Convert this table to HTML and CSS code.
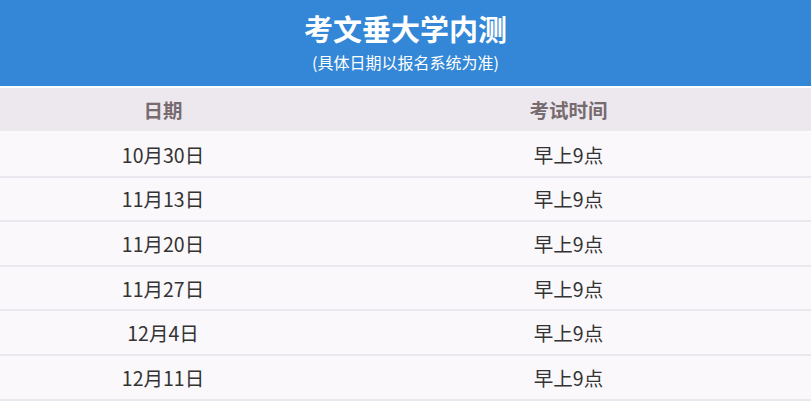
FILE: index.html
```html
<!DOCTYPE html>
<html lang="zh">
<head>
<meta charset="utf-8">
<title>考文垂大学内测</title>
<link rel="stylesheet" href="styles.css">
</head>
<body>
<div class="banner">
  <div class="title">考文垂大学内测</div>
  <div class="subtitle">(具体日期以报名系统为准)</div>
</div>
<div class="table">
  <div class="row head"><div class="c1">日期</div><div class="c2">考试时间</div></div>
  <div class="spacer"></div>
  <div class="row"><div class="c1">10月30日</div><div class="c2">早上9点</div></div>
  <div class="row"><div class="c1">11月13日</div><div class="c2">早上9点</div></div>
  <div class="row"><div class="c1">11月20日</div><div class="c2">早上9点</div></div>
  <div class="row"><div class="c1">11月27日</div><div class="c2">早上9点</div></div>
  <div class="row"><div class="c1">12月4日</div><div class="c2">早上9点</div></div>
  <div class="row"><div class="c1">12月11日</div><div class="c2">早上9点</div></div>
</div>
</body>
</html>
```
FILE: styles.css
```css
html, body {
  margin: 0;
  padding: 0;
  background: #ffffff;
  font-family: "Noto Sans CJK SC", "Noto Sans", sans-serif;
}
.banner {
  height: 86px;
  background: #3487d6;
  color: #ffffff;
  display: flex;
  flex-direction: column;
  align-items: center;
}
.title {
  margin-top: 9px;
  font-size: 29px;
  font-weight: 700;
  line-height: 38px;
}
.subtitle {
  margin-top: 5px;
  font-size: 16px;
  line-height: 20px;
}
.table {
  margin-top: 2px;
}
.row {
  display: grid;
  grid-template-columns: 326px 1fr;
  height: 44.6px;
  box-sizing: border-box;
  border-bottom: 2px solid #ebe7ef;
  background: #faf8fb;
  color: #333333;
  font-size: 19.5px;
  align-items: center;
  text-align: center;
}
.row.head {
  height: 43px;
  border-bottom: none;
  background: #ede8ee;
  color: #776b70;
  font-weight: 700;
}
.spacer {
  height: 2px;
  background: #fbfafc;
}
```
